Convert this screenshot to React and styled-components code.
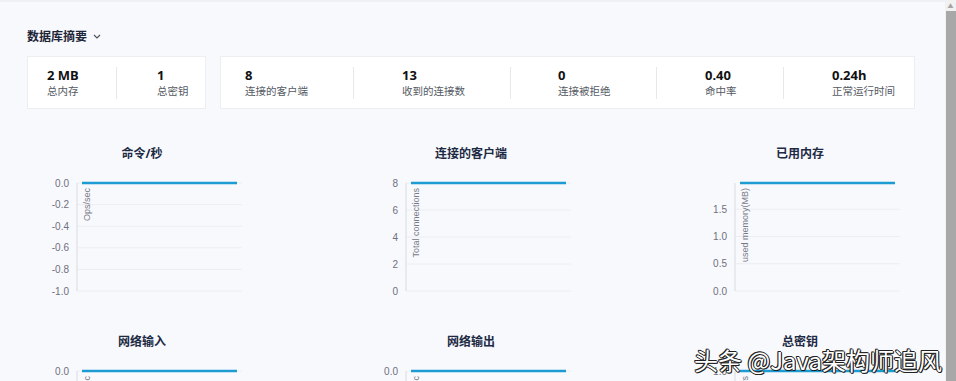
import React from 'react';
import styled, { createGlobalStyle } from 'styled-components';

const GlobalStyle = createGlobalStyle`
  html, body { margin: 0; padding: 0; height: 100%; overflow: hidden; }
  body {
    font-family: "Noto Sans", "Noto Sans CJK SC", sans-serif;
    background: #f8f9fc;
  }
`;

const BLUE = '#1d9cd3';

const summaryA = [
  { value: '2 MB', label: '总内存', pad: 19 },
  { value: '1', label: '总密钥', pad: 40 },
];

const summaryB = [
  { value: '8', label: '连接的客户端', pad: 24 },
  { value: '13', label: '收到的连接数', pad: 48 },
  { value: '0', label: '连接被拒绝', pad: 47 },
  { value: '0.40', label: '命中率', pad: 48 },
  { value: '0.24h', label: '正常运行时间', pad: 48 },
];

const range = (from, to, step) => {
  const out = [];
  for (let v = from; v >= to - 1e-9; v -= step) out.push(Number(v.toFixed(2)));
  return out;
};

const charts = [
  { title: '命令/秒', axis: 'Ops/sec', min: -1, max: 0, ticks: range(0, -1, 0.2), digits: 1, value: 0 },
  { title: '连接的客户端', axis: 'Total connections', min: 0, max: 8, ticks: range(8, 0, 2), digits: 0, value: 8 },
  { title: '已用内存', axis: 'used memory(MB)', min: 0, max: 1.98, ticks: range(1.5, 0, 0.5), digits: 1, value: 1.98 },
  { title: '网络输入', axis: 'KB/sec', min: -1, max: 0, ticks: range(0, -1, 0.2), digits: 1, value: 0 },
  { title: '网络输出', axis: 'KB/sec', min: -1, max: 0, ticks: range(0, -1, 0.2), digits: 1, value: 0 },
  { title: '总密钥', axis: 'Total keys', min: 0, max: 1, ticks: range(1, 0, 0.2), digits: 1, value: 1 },
];

const Root = styled.div`
  position: relative;
  display: flex;
  height: 100vh;
  overflow: hidden;
`;

const Main = styled.main`
  flex: 1;
  padding: 28px 30px 0 27px;
  border-top: 2px solid #eff1f5;
  box-sizing: border-box;
  min-width: 0;
`;

const Heading = styled.div`
  display: flex;
  align-items: center;
  gap: 6px;
  height: 16px;
  margin-top: -2px;
  font-size: 12px;
  font-weight: 700;
  color: #1d2538;
`;

const CardRow = styled.div`
  display: flex;
  gap: 14px;
  margin-top: 12px;
`;

const Card = styled.div`
  display: grid;
  grid-template-columns: ${p => p.cols};
  flex: ${p => (p.grow ? '1' : '0 0 179px')};
  height: 53px;
  padding: 10px 0 9px;
  box-sizing: border-box;
  background: #fff;
  border: 1px solid #eceef2;
`;

const Stat = styled.div`
  padding-left: ${p => p.pad}px;
  border-left: ${p => (p.first ? 'none' : '1px solid #e6e8ec')};
`;

const StatValue = styled.div`
  font-size: 13px;
  font-weight: 700;
  line-height: 17px;
  color: #111;
`;

const StatLabel = styled.div`
  font-size: 10.5px;
  line-height: 15px;
  color: #555a63;
`;

const ChartGrid = styled.div`
  display: grid;
  grid-template-columns: repeat(3, 230px);
  justify-content: space-between;
  row-gap: 32px;
  margin-top: 37px;
`;

const ChartBox = styled.div`
  display: flex;
  flex-direction: column;
`;

const ChartTitle = styled.div`
  text-align: center;
  font-size: 12px;
  font-weight: 700;
  line-height: 16px;
  color: #1d2a44;
`;

const ScrollTrack = styled.div`
  flex: 0 0 11px;
  display: flex;
  flex-direction: column;
  background: #f1f1f1;
`;

const ScrollArrow = styled.div`
  height: 10px;
  display: flex;
  align-items: center;
  justify-content: center;
  font-size: 6px;
  color: #a3a3a3;
`;

const ScrollThumb = styled.div`
  flex: 1;
  margin: 1px 0 0 1px;
  background: #a8a8a8;
`;

const Watermark = styled.div`
  position: absolute;
  right: 14px;
  bottom: 6px;
  font-family: "Noto Sans CJK SC", "Noto Sans", sans-serif;
  font-size: 24px;
  line-height: 30px;
  color: #fff;
  text-shadow: 1px 0 #222, -1px 0 #222, 0 1px #222, 0 -1px #222, 1px 1px #222, -1px -1px #222;
  white-space: nowrap;
`;

function Chevron() {
  return (
    <svg width="8" height="5" viewBox="0 0 8 5">
      <path d="M1 1 L4 4 L7 1" fill="none" stroke="#4a4f5a" strokeWidth="1.1" />
    </svg>
  );
}

const TOP = 21;
const H = 108;
const AXIS_X = 50;
const RIGHT = 215;

function Chart({ title, axis, min, max, ticks, digits, value }) {
  const y = v => TOP + ((max - v) / (max - min)) * H;
  return (
    <ChartBox>
      <ChartTitle>{title}</ChartTitle>
      <svg width="230" height="140">
        {ticks.map(t => (
          <g key={t}>
            <line x1={AXIS_X} x2={RIGHT} y1={y(t)} y2={y(t)} stroke="#eceef2" strokeWidth="1" />
            <text
              x={AXIS_X - 8}
              y={y(t) + 3.5}
              textAnchor="end"
              fontSize="10"
              fontFamily="Liberation Sans, Arial, sans-serif"
              fill="#6f7080"
            >
              {t.toFixed(digits)}
            </text>
          </g>
        ))}
        <line x1={AXIS_X} x2={AXIS_X} y1={TOP} y2={TOP + H} stroke="#e3e5ea" strokeWidth="1.5" />
        <text
          transform="rotate(-90)"
          x={-(TOP + 5)}
          y={AXIS_X + 13}
          textAnchor="end"
          fontSize="9"
          fontFamily="Liberation Sans, Arial, sans-serif"
          fill="#777a86"
        >
          {axis}
        </text>
        <line x1={AXIS_X + 5} x2={RIGHT - 5} y1={y(value)} y2={y(value)} stroke={BLUE} strokeWidth="2.5" />
      </svg>
    </ChartBox>
  );
}

export default function App() {
  return (
    <Root>
      <GlobalStyle />
      <Main>
        <Heading>
          数据库摘要
          <Chevron />
        </Heading>
        <CardRow>
          <Card cols="88px 1fr">
            {summaryA.map((s, i) => (
              <Stat key={s.label} pad={s.pad} first={i === 0}>
                <StatValue>{s.value}</StatValue>
                <StatLabel>{s.label}</StatLabel>
              </Stat>
            ))}
          </Card>
          <Card grow cols="132px 157px 146px 127px 1fr">
            {summaryB.map((s, i) => (
              <Stat key={s.label} pad={s.pad} first={i === 0}>
                <StatValue>{s.value}</StatValue>
                <StatLabel>{s.label}</StatLabel>
              </Stat>
            ))}
          </Card>
        </CardRow>
        <ChartGrid>
          {charts.map(c => (
            <Chart key={c.title} {...c} />
          ))}
        </ChartGrid>
      </Main>
      <ScrollTrack>
        <ScrollArrow>▲</ScrollArrow>
        <ScrollThumb />
      </ScrollTrack>
      <Watermark>头条 @Java架构师追风</Watermark>
    </Root>
  );
}
